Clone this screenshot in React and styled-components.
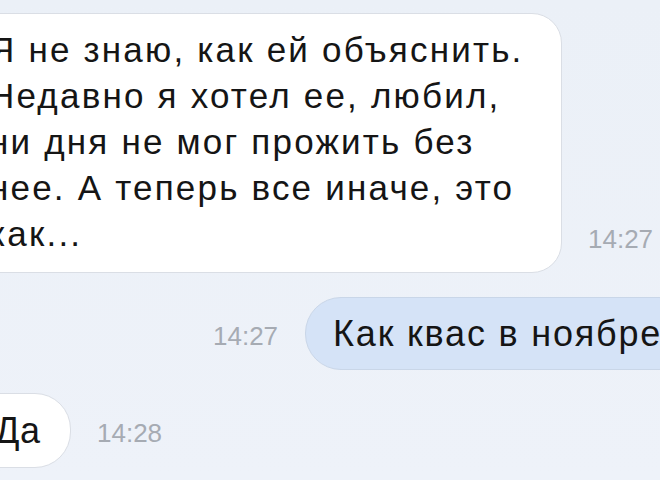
import React from "react";
import styled, { createGlobalStyle } from "styled-components";

const GlobalStyle = createGlobalStyle`
  html, body {
    margin: 0;
    padding: 0;
    background: #edf1f8;
  }
  body {
    font-family: "Liberation Sans", Arial, sans-serif;
    color: #151515;
  }
`;

const Screen = styled.div`
  width: 660px;
  height: 480px;
  overflow: hidden;
  box-sizing: border-box;
  padding-top: 13px;
  display: flex;
  flex-direction: column;
  background: linear-gradient(180deg, #ebf0f7 0%, #eef2f9 100%);
`;

const Row = styled.div`
  display: flex;
  align-items: ${props => props.$align || "flex-end"};
  margin-top: ${props => props.$gap || 0}px;
  padding-left: ${props => props.$indent || 0}px;
`;

const Bubble = styled.div`
  flex: 0 0 auto;
  box-sizing: border-box;
  white-space: pre-line;
  background: ${props => (props.$out ? "#d5e3f7" : "#ffffff")};
  border: 1px solid ${props => (props.$out ? "#c9d6e8" : "#dadee5")};
  border-radius: ${props => props.$radius || 36}px;
`;

const LongBubble = styled(Bubble)`
  width: 602px;
  margin-left: -40px;
  padding: 13px 20px 15px 28px;
  font-size: 35px;
  line-height: 46px;
  letter-spacing: 2.2px;
`;

const ShortBubble = styled(Bubble)`
  height: ${props => props.$height}px;
  line-height: ${props => props.$height - 2}px;
  font-size: 36px;
  letter-spacing: 1.8px;
  white-space: nowrap;
  padding: 0 32px 0 27px;
`;

const EdgeBubble = styled(ShortBubble)`
  width: 111px;
  margin-left: -40px;
  padding-left: 34px;
  letter-spacing: 0.5px;
`;

const Time = styled.span`
  flex: 0 0 auto;
  font-size: 26px;
  line-height: 26px;
  color: #a6abb3;
  margin: ${props => props.$margin || "0"};
`;

const messageText = `Я не знаю, как ей объяснить.
Недавно я хотел ее, любил,
ни дня не мог прожить без
нее. А теперь все иначе, это
как...`;

export default function App() {
  return (
    <>
      <GlobalStyle />
      <Screen>
        <Row>
          <LongBubble $radius={30}>{messageText}</LongBubble>
          <Time $margin="0 0 21px 26px">14:27</Time>
        </Row>
        <Row $gap={24} $indent={213} $align="center">
          <Time $margin="4px 27px 0 0">14:27</Time>
          <ShortBubble $out $height={73}>Как квас в ноябре</ShortBubble>
        </Row>
        <Row $gap={23} $align="center">
          <EdgeBubble $height={75}>Да</EdgeBubble>
          <Time $margin="4px 0 0 26px">14:28</Time>
        </Row>
      </Screen>
    </>
  );
}
